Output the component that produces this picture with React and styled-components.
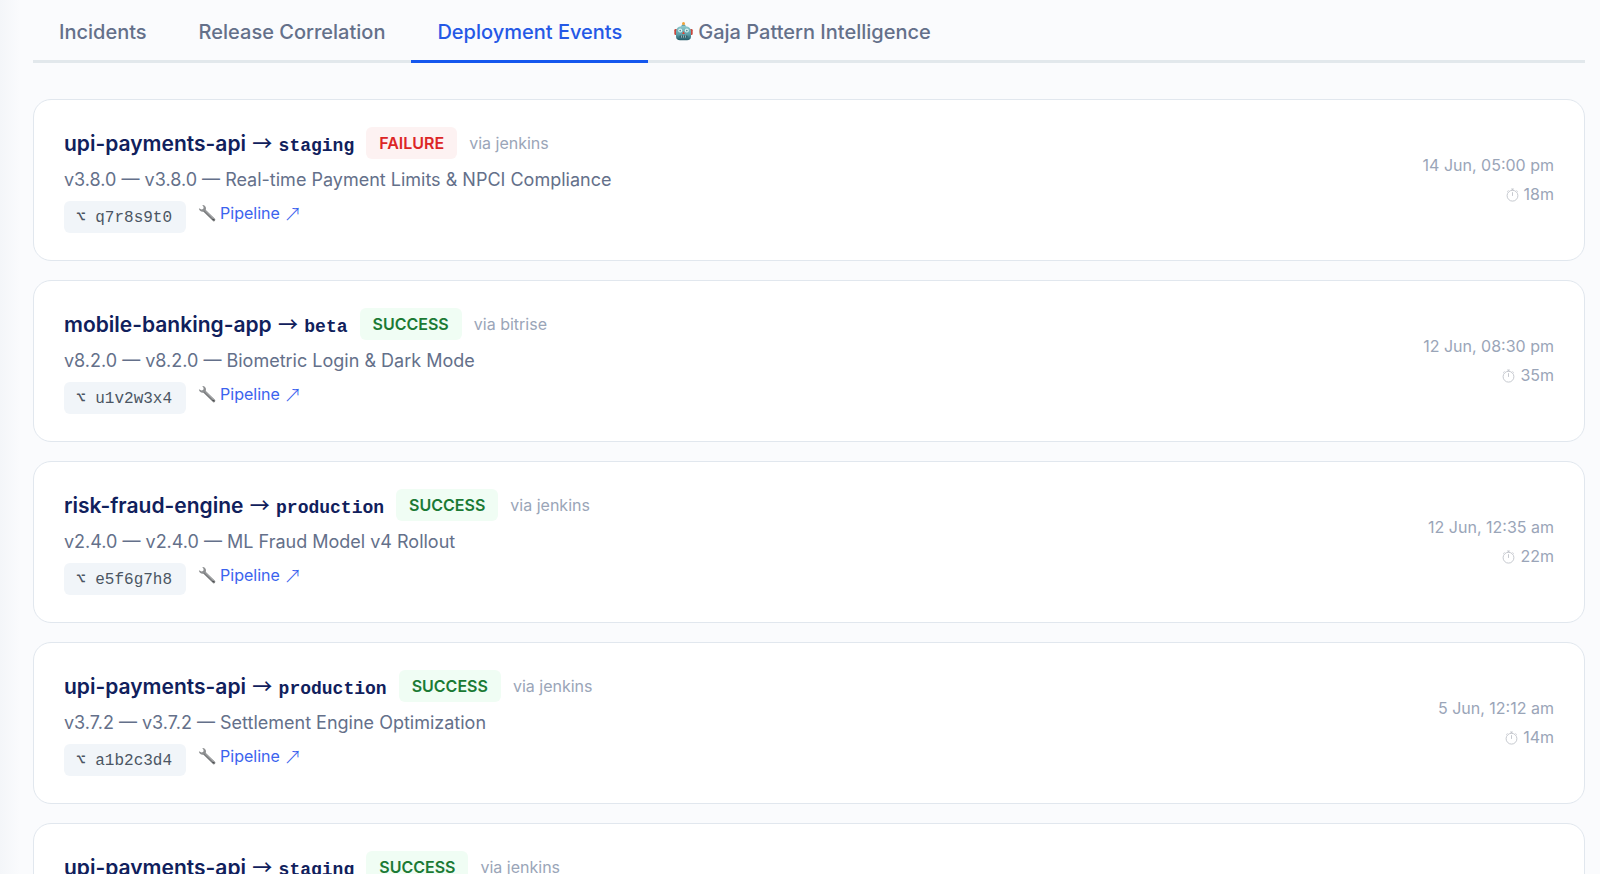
import React, { useState } from "react";
import styled, { createGlobalStyle } from "styled-components";

const SANS = `Inter, "Liberation Sans", sans-serif`;
const MONO = `"Liberation Mono", "DejaVu Sans Mono", monospace`;
const ARROWS = `"Noto Sans CJK JP", sans-serif`;

const GlobalStyle = createGlobalStyle`
  *, *::before, *::after {
    box-sizing: border-box;
  }

  body {
    margin: 0;
    background: linear-gradient(90deg, #f4f6f9 0, #fafbfd 20px) #fafbfd;
    font-family: ${SANS};
  }
`;

/* ---------- Page and tabs ---------- */

const Page = styled.main`
  padding: 0 15px 0 33px;
  height: 100vh;
  overflow: hidden;
`;

const TabBar = styled.nav`
  display: flex;
  border-bottom: 3px solid #e2e8ec;
  margin-bottom: 36px;
`;

const Tab = styled.button`
  display: flex;
  align-items: center;
  gap: 5px;
  height: 63px;
  margin-bottom: -3px;
  padding: 4px 26px 0;
  border: 0;
  border-bottom: 3px solid ${(p) => (p.$active ? "#1557ee" : "transparent")};
  background: none;
  color: ${(p) => (p.$active ? "#2458e6" : "#64708a")};
  font: 500 20px/28px ${SANS};
  cursor: pointer;
`;

/* ---------- Event cards ---------- */

const EventList = styled.section`
  display: flex;
  flex-direction: column;
  gap: 19px;
`;

const Card = styled.article`
  display: flex;
  align-items: center;
  justify-content: space-between;
  padding: 27px 30px;
  border: 1px solid #e1e7ee;
  border-radius: 18px;
  background: #fff;
`;

const Details = styled.div`
  display: flex;
  flex-direction: column;
`;

const Heading = styled.div`
  display: flex;
  align-items: flex-start;
  gap: 12px;
`;

const Title = styled.h2`
  margin: 0;
  color: #10205c;
  font: 600 21px/34px ${SANS};
`;

const Arrow = styled.span`
  margin: 0 1px;
  font: 500 20px/24px ${ARROWS};
`;

const Environment = styled.code`
  font: 600 18px/24px ${MONO};
`;

const Badge = styled.span`
  padding: 4px 13px;
  border-radius: 6px;
  background: ${(p) => (p.$failed ? "#fdf2f2" : "#f0fdf4")};
  color: ${(p) => (p.$failed ? "#dc2626" : "#1b7a34")};
  font-size: 16px;
  font-weight: 600;
  line-height: 24px;
`;

const Muted = styled.span`
  color: #9aa5b8;
  font-size: 16px;
  line-height: 29px;
`;

const Source = styled(Muted)`
  line-height: 32px;
`;

const Summary = styled.p`
  margin: 3px 0 6px;
  color: #64708a;
  font-size: 18px;
  line-height: 31px;
`;

const Meta = styled.div`
  display: flex;
  align-items: flex-start;
  gap: 12px;
`;

const Commit = styled.code`
  padding: 5px 14px 3px 12px;
  border-radius: 6px;
  background: #f1f5f9;
  color: #4b5563;
  font: 16px/24px ${MONO};
`;

const PipelineLink = styled.a`
  display: flex;
  align-items: center;
  gap: 4px;
  color: #3b63ee;
  font-size: 16px;
  line-height: 24px;
  text-decoration: none;
`;

const OutArrow = styled.span`
  font: 300 18px/24px ${ARROWS};
`;

const Timing = styled.div`
  display: flex;
  flex-direction: column;
  align-items: flex-end;
`;

const Duration = styled(Muted)`
  display: flex;
  align-items: center;
  gap: 5px;
`;

/* ---------- Icons ---------- */

const RobotIcon = () => (
  <svg width="19" height="20" viewBox="0 0 19 20" aria-hidden="true">
    <defs>
      <linearGradient id="robotFace" x1="0" y1="0" x2="0" y2="1">
        <stop offset="0" stopColor="#8fc9cc" />
        <stop offset="0.6" stopColor="#5c9ea8" />
        <stop offset="1" stopColor="#215765" />
      </linearGradient>
    </defs>
    <rect x="0.3" y="7" width="3" height="6" rx="1.2" fill="#c9483d" />
    <rect x="15.7" y="7" width="3" height="6" rx="1.2" fill="#c9483d" />
    <path d="M8 2.500H11L12 5H7Z" fill="#64a3ad" />
    <circle cx="9.5" cy="1.6" r="1.5" fill="#f2a33a" />
    <path
      d="M9.5 4C14.500 4 17 6 17 10V14.500C17 17 15.500 18.300 13 18.300H6C3.500 18.300 2 17 2 14.500V10C2 6 4.500 4 9.500 4Z"
      fill="url(#robotFace)"
    />
    <circle cx="6.2" cy="8.6" r="2" fill="#d8f4f5" />
    <circle cx="12.8" cy="8.6" r="2" fill="#d8f4f5" />
    <circle cx="6.2" cy="8.6" r="0.9" fill="#5b8f99" />
    <circle cx="12.8" cy="8.6" r="0.9" fill="#5b8f99" />
    <path d="M9.5 9.2L11 12H8Z" fill="#d9483b" />
    <rect x="5.5" y="13.5" width="8" height="2.2" rx="1" fill="#355f6a" />
    <path d="M7.5 13.500V15.700M9.500 13.500V15.700M11.500 13.500V15.700" stroke="#b9d6d8" strokeWidth="0.7" />
  </svg>
);

const WrenchIcon = () => (
  <svg width="18" height="18" viewBox="0 0 18 18" aria-hidden="true">
    <path d="M6 6.2L15.800 15.800" stroke="#77797b" strokeWidth="3" strokeLinecap="round" />
    <path d="M6.5 6L15.800 15" stroke="#b4b6b8" strokeWidth="1" strokeLinecap="round" />
    <path
      d="M4.3 1.100C6.200 0.800 7.900 2.300 8 4.300C8 6.300 6.600 7.700 4.700 7.700C2.700 7.700 1 6.200 0.900 4.200L3.600 5.600L5.400 4.900L5.600 3.100Z"
      fill="#8d8f91"
    />
    <circle cx="15.2" cy="15.4" r="0.7" fill="#3e4042" />
  </svg>
);

const StopwatchIcon = () => (
  <svg width="13" height="14" viewBox="0 0 13 14" fill="none" stroke="#bfc3ca" strokeWidth="0.9" aria-hidden="true">
    <circle cx="6.5" cy="7.7" r="5.4" />
    <path d="M6.5 4.200V7.900M5.200 1H7.800M6.500 1V2.300M10.500 2.500L11.700 3.600M2.500 2.500L1.300 3.600" />
  </svg>
);

/* ---------- Data ---------- */

const TABS = ["Incidents", "Release Correlation", "Deployment Events", "Gaja Pattern Intelligence"];

const EVENTS = [
  {
    service: "upi-payments-api",
    env: "staging",
    status: "FAILURE",
    via: "jenkins",
    version: "v3.8.0",
    name: "Real-time Payment Limits & NPCI Compliance",
    commit: "q7r8s9t0",
    time: "14 Jun, 05:00 pm",
    duration: "18m",
  },
  {
    service: "mobile-banking-app",
    env: "beta",
    status: "SUCCESS",
    via: "bitrise",
    version: "v8.2.0",
    name: "Biometric Login & Dark Mode",
    commit: "u1v2w3x4",
    time: "12 Jun, 08:30 pm",
    duration: "35m",
  },
  {
    service: "risk-fraud-engine",
    env: "production",
    status: "SUCCESS",
    via: "jenkins",
    version: "v2.4.0",
    name: "ML Fraud Model v4 Rollout",
    commit: "e5f6g7h8",
    time: "12 Jun, 12:35 am",
    duration: "22m",
  },
  {
    service: "upi-payments-api",
    env: "production",
    status: "SUCCESS",
    via: "jenkins",
    version: "v3.7.2",
    name: "Settlement Engine Optimization",
    commit: "a1b2c3d4",
    time: "5 Jun, 12:12 am",
    duration: "14m",
  },
  // only the heading row of this one is above the fold
  {
    service: "upi-payments-api",
    env: "staging",
    status: "SUCCESS",
    via: "jenkins",
  },
];

function EventCard({ event }) {
  return (
    <Card>
      <Details>
        <Heading>
          <Title>
            {event.service} <Arrow>→</Arrow> <Environment>{event.env}</Environment>
          </Title>
          <Badge $failed={event.status === "FAILURE"}>{event.status}</Badge>
          <Source>via {event.via}</Source>
        </Heading>
        {event.version && (
          <Summary>
            {event.version} — {event.version} — {event.name}
          </Summary>
        )}
        {event.commit && (
          <Meta>
            <Commit>⌥ {event.commit}</Commit>
            <PipelineLink href="#pipeline">
              <WrenchIcon />
              Pipeline <OutArrow>↗</OutArrow>
            </PipelineLink>
          </Meta>
        )}
      </Details>
      {event.time && (
        <Timing>
          <Muted as="time">{event.time}</Muted>
          <Duration>
            <StopwatchIcon />
            {event.duration}
          </Duration>
        </Timing>
      )}
    </Card>
  );
}

export default function App() {
  const [active, setActive] = useState("Deployment Events");

  return (
    <>
      <GlobalStyle />
      <Page>
        <TabBar>
          {TABS.map((label) => (
            <Tab key={label} type="button" $active={label === active} onClick={() => setActive(label)}>
              {label.startsWith("Gaja") && <RobotIcon />}
              {label}
            </Tab>
          ))}
        </TabBar>
        <EventList>
          {EVENTS.map((event, i) => (
            <EventCard key={i} event={event} />
          ))}
        </EventList>
      </Page>
    </>
  );
}
